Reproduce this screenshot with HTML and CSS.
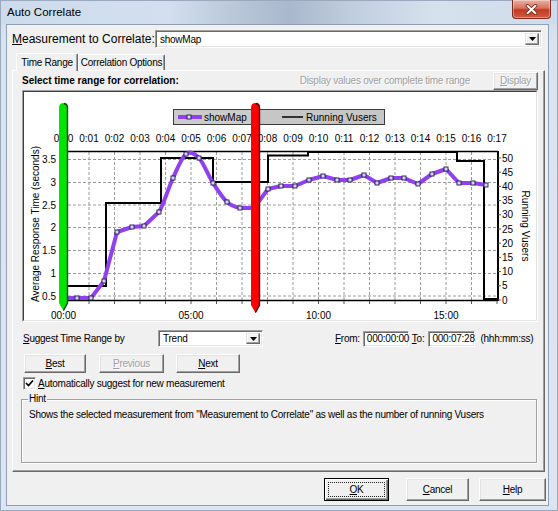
FILE: index.html
```html
<!DOCTYPE html>
<html>
<head>
<meta charset="utf-8">
<title>Auto Correlate</title>
<link rel="stylesheet" href="styles.css">
</head>
<body>
<div class="window">
  <div class="titlebar">
    <span class="title">Auto Correlate</span>
    <span class="close"><svg width="13" height="11" viewBox="0 0 13 11"><path d="M2.5,1.8 L10.5,9.2 M10.5,1.8 L2.5,9.2" stroke="#6b1f14" stroke-width="3.6" stroke-linecap="round"/><path d="M2.5,1.8 L10.5,9.2 M10.5,1.8 L2.5,9.2" stroke="#fff" stroke-width="2" stroke-linecap="round"/></svg></span>
  </div>
  <div class="client">
    <div class="meas-row">
      <span class="meas-label"><u>M</u>easurement to Correlate:</span>
      <div class="combo combo-meas"><span class="combo-text">showMap</span><span class="combo-btn"><svg width="7" height="4" viewBox="0 0 7 4"><path d="M0,0 H7 L3.5,4 Z" fill="#000"/></svg></span></div>
    </div>
    <div class="tabs">
      <div class="tab sel">Time Range</div>
      <div class="tab">Correlation Options</div>
    </div>
    <div class="panel">
      <div class="panel-head">
        <span class="bold">Select time range for correlation:</span>
        <span class="disp-text disabled">Display values over complete time range</span>
        <div class="btn btn-display disabled"><span><u>D</u>isplay</span></div>
      </div>
      <div class="chart"><div class="chart-inner">
        <svg class="chart-svg" width="512" height="228" viewBox="24 92 512 228">
          <defs>
            <rect id="mk" x="-2" y="-2" width="4" height="4" fill="#ddd0ff" stroke="#1e1e4a" stroke-width="0.9"/>
          </defs>
          <rect x="24" y="92" width="512" height="228" fill="#fff"/>
          <!-- legend -->
          <rect x="173.5" y="109.5" width="84" height="15" fill="#cbcbcb" stroke="#3a3a3a"/>
          <rect x="257.5" y="109.5" width="127" height="15" fill="#c6c6c6" stroke="#3a3a3a"/>
          <line x1="178" y1="117" x2="202" y2="117" stroke="#9040ee" stroke-width="4"/>
          <use href="#mk" x="189" y="117"/>
          <text x="204" y="120.5">showMap</text>
          <line x1="282" y1="117" x2="303" y2="117" stroke="#000" stroke-width="1.5"/>
          <text x="306" y="120.5">Running Vusers</text>
          <!-- top labels -->
          <g text-anchor="middle">
            <text x="63.5" y="142">0:00</text><text x="89" y="142">0:01</text><text x="114.5" y="142">0:02</text><text x="140" y="142">0:03</text><text x="165.5" y="142">0:04</text><text x="191" y="142">0:05</text><text x="216.5" y="142">0:06</text><text x="242" y="142">0:07</text><text x="267.5" y="142">0:08</text><text x="293" y="142">0:09</text><text x="318.5" y="142">0:10</text><text x="344" y="142">0:11</text><text x="369.5" y="142">0:12</text><text x="395" y="142">0:13</text><text x="420.5" y="142">0:14</text><text x="446" y="142">0:15</text><text x="471.5" y="142">0:16</text><text x="497" y="142">0:17</text>
            <text x="63.5" y="318.5">00:00</text><text x="191" y="318.5">05:00</text><text x="318.5" y="318.5">10:00</text><text x="446" y="318.5">15:00</text>
          </g>
          <!-- grid -->
          <path d="M89,152V300M114.5,152V300M140,152V300M165.5,152V300M191,152V300M216.5,152V300M242,152V300M267.5,152V300M293,152V300M318.5,152V300M344,152V300M369.5,152V300M395,152V300M420.5,152V300M446,152V300M471.5,152V300" stroke="#9a9a9a" stroke-width="1" stroke-dasharray="3 2" fill="none"/>
          <path d="M63,159.5H497M63,182.5H497M63,205H497M63,227.5H497M63,250.5H497M63,273.5H497M63,296H497" stroke="#9a9a9a" stroke-width="1" stroke-dasharray="3 2" fill="none"/>
          <!-- frame -->
          <path d="M63,151.5H498" stroke="#000" stroke-width="1.5"/>
          <path d="M63,300.5H498" stroke="#000" stroke-width="1.5"/>
          <path d="M498,151V301" stroke="#000" stroke-width="2"/>
          <path d="M63.5,301v3M89,301v3M114.5,301v3M140,301v3M165.5,301v3M191,301v3M216.5,301v3M242,301v3M267.5,301v3M293,301v3M318.5,301v3M344,301v3M369.5,301v3M395,301v3M420.5,301v3M446,301v3M471.5,301v3M497,301v3" stroke="#555" stroke-width="1"/>
          <path d="M498,300h3M498,285.8h3M498,271.6h3M498,257.4h3M498,243.2h3M498,229h3M498,214.8h3M498,200.6h3M498,186.4h3M498,172.2h3M498,158h3" stroke="#555" stroke-width="1"/>
          <!-- axis labels -->
          <g text-anchor="end">
            <text x="56" y="163">3.5</text><text x="56" y="186">3</text><text x="56" y="208.5">2.5</text><text x="56" y="231">2</text><text x="56" y="254">1.5</text><text x="56" y="277">1</text><text x="56" y="299.5">0.5</text>
          </g>
          <g>
            <text x="502" y="161.5">50</text><text x="502" y="175.7">45</text><text x="502" y="189.9">40</text><text x="502" y="204.1">35</text><text x="502" y="218.3">30</text><text x="502" y="232.5">25</text><text x="502" y="246.7">20</text><text x="502" y="260.9">15</text><text x="502" y="275.1">10</text><text x="502" y="289.3">5</text><text x="502" y="303.5">0</text>
          </g>
          <text transform="translate(38.5,224) rotate(-90)" text-anchor="middle">Average Response Time (seconds)</text>
          <text transform="translate(521.5,226) rotate(90)" text-anchor="middle">Running Vusers</text>
          <!-- running vusers -->
          <path d="M63,286H106V203H161V158H213V182H268V155.5H308V152H457V161H484V299H498" stroke="#000" stroke-width="2" fill="none"/>
          <!-- showMap -->
          <path d="M66,298 L77,298 L91,298 L104,281 L117,232 L132,227 L144,226 L159,212 C163.8,204 168.5,187.7 173,178 C177.5,168.3 181.7,157.3 186,154 C190.3,150.7 194.5,153.2 199,158 C203.5,162.8 208.3,175.7 213,183 C217.7,190.3 222.5,197.8 227,202 C231.5,206.2 235.5,207 240,208 L254,208 L268,189 L281,186 L295,186 L309,180 L323,176 L337,180 L350,180 L364,175 L377,183 L391,178 L404,178 L418,184 L432,174 L446,169 L459,183 L473,183 L486,185" stroke="#9040ee" stroke-width="4" fill="none" stroke-linejoin="round" stroke-linecap="round"/>
          <g>
            <use href="#mk" x="77" y="298"/><use href="#mk" x="91" y="298"/><use href="#mk" x="104" y="281"/><use href="#mk" x="117" y="232"/><use href="#mk" x="132" y="227"/><use href="#mk" x="144" y="226"/><use href="#mk" x="159" y="212"/><use href="#mk" x="173" y="178"/><use href="#mk" x="186" y="154"/><use href="#mk" x="199" y="158"/><use href="#mk" x="213" y="183"/><use href="#mk" x="227" y="202"/><use href="#mk" x="240" y="208"/><use href="#mk" x="268" y="189"/><use href="#mk" x="281" y="186"/><use href="#mk" x="295" y="186"/><use href="#mk" x="309" y="180"/><use href="#mk" x="323" y="176"/><use href="#mk" x="337" y="180"/><use href="#mk" x="350" y="180"/><use href="#mk" x="364" y="175"/><use href="#mk" x="377" y="183"/><use href="#mk" x="391" y="178"/><use href="#mk" x="404" y="178"/><use href="#mk" x="418" y="184"/><use href="#mk" x="432" y="174"/><use href="#mk" x="446" y="169"/><use href="#mk" x="459" y="183"/><use href="#mk" x="473" y="183"/><use href="#mk" x="486" y="185"/>
          </g>
          <!-- range bars -->
          <path d="M59,108 Q59,103 63.5,103 Q68,103 68,108 V303 L63.5,311 L59,303 Z" fill="#00e400"/>
          <path d="M64,103.5 Q67.5,104 67.5,108 V303 L63.5,310.5" stroke="#0a4a0a" stroke-width="1.4" fill="none"/>
          <path d="M251,108 Q251,103 255.5,103 Q260,103 260,108 V305 L255.5,313 L251,305 Z" fill="#ff0000"/>
          <path d="M256,103.5 Q259.5,104 259.5,108 V305 L255.5,312.5" stroke="#5a0000" stroke-width="1.4" fill="none"/>
        </svg>
      </div></div>
      <div class="suggest-row">
        <span class="sug-label"><u>S</u>uggest Time Range by</span>
        <div class="combo combo-trend"><span class="combo-text">Trend</span><span class="combo-btn"><svg width="7" height="4" viewBox="0 0 7 4"><path d="M0,0 H7 L3.5,4 Z" fill="#000"/></svg></span></div>
        <span class="from-label"><u>F</u>rom:</span>
        <div class="field">000:00:00</div>
        <span class="to-label"><u>T</u>o:</span>
        <div class="field field-to">000:07:28</div>
        <span class="fmt">(hhh:mm:ss)</span>
      </div>
      <div class="btn-row">
        <div class="btn btn-best"><span><u>B</u>est</span></div>
        <div class="btn btn-prev disabled"><span><u>P</u>revious</span></div>
        <div class="btn btn-next"><span><u>N</u>ext</span></div>
      </div>
      <div class="check-row">
        <span class="checkbox"><svg width="9" height="9" viewBox="0 0 9 9"><path d="M1,4 L3.5,6.5 L8,1.5" stroke="#000" stroke-width="1.7" fill="none"/></svg></span>
        <span class="check-label"><u>A</u>utomatically suggest for new measurement</span>
      </div>
      <fieldset class="hint">
        <legend>Hint</legend>
        <p class="hint-text">Shows the selected measurement from "Measurement to Correlate" as well as the number of running Vusers</p>
      </fieldset>
    </div>
    <div class="dlg-buttons">
      <div class="btn btn-ok"><span class="focus"><u>O</u>K</span></div>
      <div class="btn btn-cancel"><span><u>C</u>ancel</span></div>
      <div class="btn btn-help"><span><u>H</u>elp</span></div>
    </div>
  </div>
</div>
</body>
</html>
```
FILE: styles.css
```css
* { box-sizing: border-box; }
html, body { margin: 0; padding: 0; }
body {
  width: 558px;
  height: 511px;
  overflow: hidden;
  background: #d7e3f1;
  font-family: "Liberation Sans", Arial, sans-serif;
  font-size: 10px;
  letter-spacing: -0.25px;
  color: #000;
}
u { text-decoration: underline; text-underline-offset: 1px; }

.window {
  width: 558px;
  height: 511px;
  display: flex;
  flex-direction: column;
  background: linear-gradient(#cbd9ea, #d9e4f1 40px, #dce6f2);
  border: 1px solid #9aa9bd;
}
.titlebar {
  height: 23px;
  flex: none;
  display: flex;
  justify-content: space-between;
  align-items: flex-start;
  padding: 0 6px 0 6px;
  background: linear-gradient(90deg, #cddbec 0%, #d3dfee 30%, #b9c7d9 42%, #a9b8cc 52%, #c2cfe0 64%, #d6e1ee 78%, #cfdbea 100%);
}
.title {
  font-size: 11.5px;
  letter-spacing: 0;
  line-height: 23px;
  color: #000;
}
.close {
  width: 39px;
  height: 19px;
  margin-top: -1px;
  display: flex;
  align-items: center;
  justify-content: center;
  background: linear-gradient(#eab0a4, #d7715c 45%, #c2391f 55%, #d35c42);
  border: 1px solid #7b2b1f;
  border-top: none;
  border-radius: 0 0 4px 4px;
  box-shadow: inset 0 0 0 1px rgba(255,255,255,0.35);
}

.client {
  flex: 1;
  margin: 0 8px 4px 5px;
  background: #f0f0f0;
  border: 1px solid #8f9fb5;
  display: flex;
  flex-direction: column;
}

.meas-row {
  margin-top: 5px;
  padding-left: 5px;
  height: 18px;
  display: flex;
  align-items: center;
}
.meas-label {
  width: 143px;
  font-size: 12px;
  letter-spacing: 0;
  white-space: nowrap;
}

.combo {
  display: flex;
  align-items: stretch;
  background: #fff;
  border: 1px solid;
  border-color: #a0a0a0 #fff #fff #a0a0a0;
  box-shadow: inset 1px 1px 0 #696969, inset -1px -1px 0 #e3e3e3;
  padding: 2px;
}
.combo-text {
  flex: 1;
  padding-left: 2px;
  display: flex;
  align-items: center;
  white-space: nowrap;
}
.combo-btn {
  width: 14px;
  background: #f0f0f0;
  border: 1px solid;
  border-color: #e3e3e3 #696969 #696969 #e3e3e3;
  box-shadow: inset -1px -1px 0 #a0a0a0, inset 1px 1px 0 #fff;
  display: flex;
  align-items: center;
  justify-content: center;
}
.combo-meas { width: 387px; height: 18px; }
.combo-trend { width: 105px; height: 17px; }

.tabs {
  margin-top: 4px;
  padding-left: 9px;
  height: 18px;
  display: flex;
  align-items: flex-end;
}
.tab {
  height: 16px;
  display: flex;
  align-items: center;
  justify-content: center;
  border-top: 1px solid #fff;
  border-left: 1px solid #fff;
  border-right: 1px solid #696969;
  box-shadow: inset -1px 0 0 #a0a0a0;
  border-radius: 2px 2px 0 0;
  width: 87px;
  white-space: nowrap;
}
.tab.sel {
  height: 18px;
  width: 62px;
  margin-bottom: -1px;
  background: #f0f0f0;
  position: relative;
  z-index: 1;
}

.panel {
  margin-left: 5px;
  width: 533px;
  height: 402px;
  border: 1px solid;
  border-color: #fff #696969 #696969 #fff;
  box-shadow: inset -1px -1px 0 #a0a0a0;
  display: flex;
  flex-direction: column;
}
.panel-head {
  height: 19px;
  display: flex;
  align-items: center;
  padding-left: 9px;
  padding-right: 6px;
}
.bold {
  font-weight: bold;
  letter-spacing: 0;
  white-space: nowrap;
}
.disabled {
  color: #a0a0a0;
  text-shadow: 1px 1px 0 #fff;
}
.disp-text {
  margin-left: auto;
  margin-right: 23px;
  white-space: nowrap;
}

.btn {
  display: flex;
  align-items: center;
  justify-content: center;
  background: #f0f0f0;
  border: 1px solid;
  border-color: #fff #696969 #696969 #fff;
  box-shadow: inset -1px -1px 0 #a0a0a0, inset 1px 1px 0 #e3e3e3;
  white-space: nowrap;
}
.btn-display { width: 45px; height: 18px; }

.chart {
  margin-left: 9px;
  width: 516px;
  height: 232px;
  border: 1px solid;
  border-color: #a0a0a0 #fff #fff #a0a0a0;
}
.chart-inner {
  width: 514px;
  height: 230px;
  border: 1px solid;
  border-color: #404040 #e3e3e3 #e3e3e3 #404040;
}
.chart-svg { display: block; }
.chart-svg text {
  font-family: "Liberation Sans", Arial, sans-serif;
  font-size: 10px;
  letter-spacing: 0;
  fill: #000;
}

.suggest-row {
  margin-top: 8px;
  height: 17px;
  padding-left: 9px;
  display: flex;
  align-items: center;
}
.sug-label { width: 136px; white-space: nowrap; padding-left: 1px; }
.from-label { margin-left: 72px; white-space: nowrap; }
.field {
  margin-left: 3px;
  width: 46px;
  height: 16px;
  background: #fff;
  border: 1px solid;
  border-color: #a0a0a0 #fff #fff #a0a0a0;
  box-shadow: inset 1px 1px 0 #696969, inset -1px -1px 0 #e3e3e3;
  padding-left: 3px;
  display: flex;
  align-items: center;
  white-space: nowrap;
}
.to-label { margin-left: 3px; }
.field-to { margin-left: 4px; width: 47px; }
.fmt { margin-left: 5px; white-space: nowrap; }

.btn-row {
  margin-top: 7px;
  height: 19px;
  padding-left: 11px;
  display: flex;
}
.btn-best { width: 62px; }
.btn-prev { width: 65px; margin-left: 13px; }
.btn-next { width: 64px; margin-left: 12px; }

.check-row {
  margin-top: 4px;
  height: 13px;
  padding-left: 10px;
  display: flex;
  align-items: center;
}
.checkbox {
  width: 13px;
  height: 13px;
  background: #fff;
  border: 1px solid;
  border-color: #a0a0a0 #fff #fff #a0a0a0;
  box-shadow: inset 1px 1px 0 #696969, inset -1px -1px 0 #e3e3e3;
  display: flex;
  align-items: center;
  justify-content: center;
}
.check-label { margin-left: 2px; white-space: nowrap; }

.hint {
  margin: 3px 0 0 8px;
  width: 516px;
  height: 70px;
  padding: 0 7px;
  min-width: 0;
  border: 1px solid #a0a0a0;
  box-shadow: 1px 1px 0 #fff, inset 1px 1px 0 #fff;
}
.hint legend {
  padding: 0 1px;
  margin-left: -1px;
  line-height: 12px;
}
.hint-text {
  margin: 4px 0 0;
  white-space: nowrap;
}

.dlg-buttons {
  margin-top: 6px;
  height: 23px;
  padding-right: 2px;
  display: flex;
  justify-content: flex-end;
}
.btn-ok {
  width: 65px;
  border: 1px solid #000;
  box-shadow: inset 1px 1px 0 #fff, inset -1px -1px 0 #696969, inset -2px -2px 0 #a0a0a0;
  padding: 3px;
}
.focus {
  flex: 1;
  align-self: stretch;
  border: 1px dotted #222;
  display: flex;
  align-items: center;
  justify-content: center;
}
.btn-cancel { width: 63px; margin-left: 17px; }
.btn-help { width: 67px; margin-left: 10px; }
```
